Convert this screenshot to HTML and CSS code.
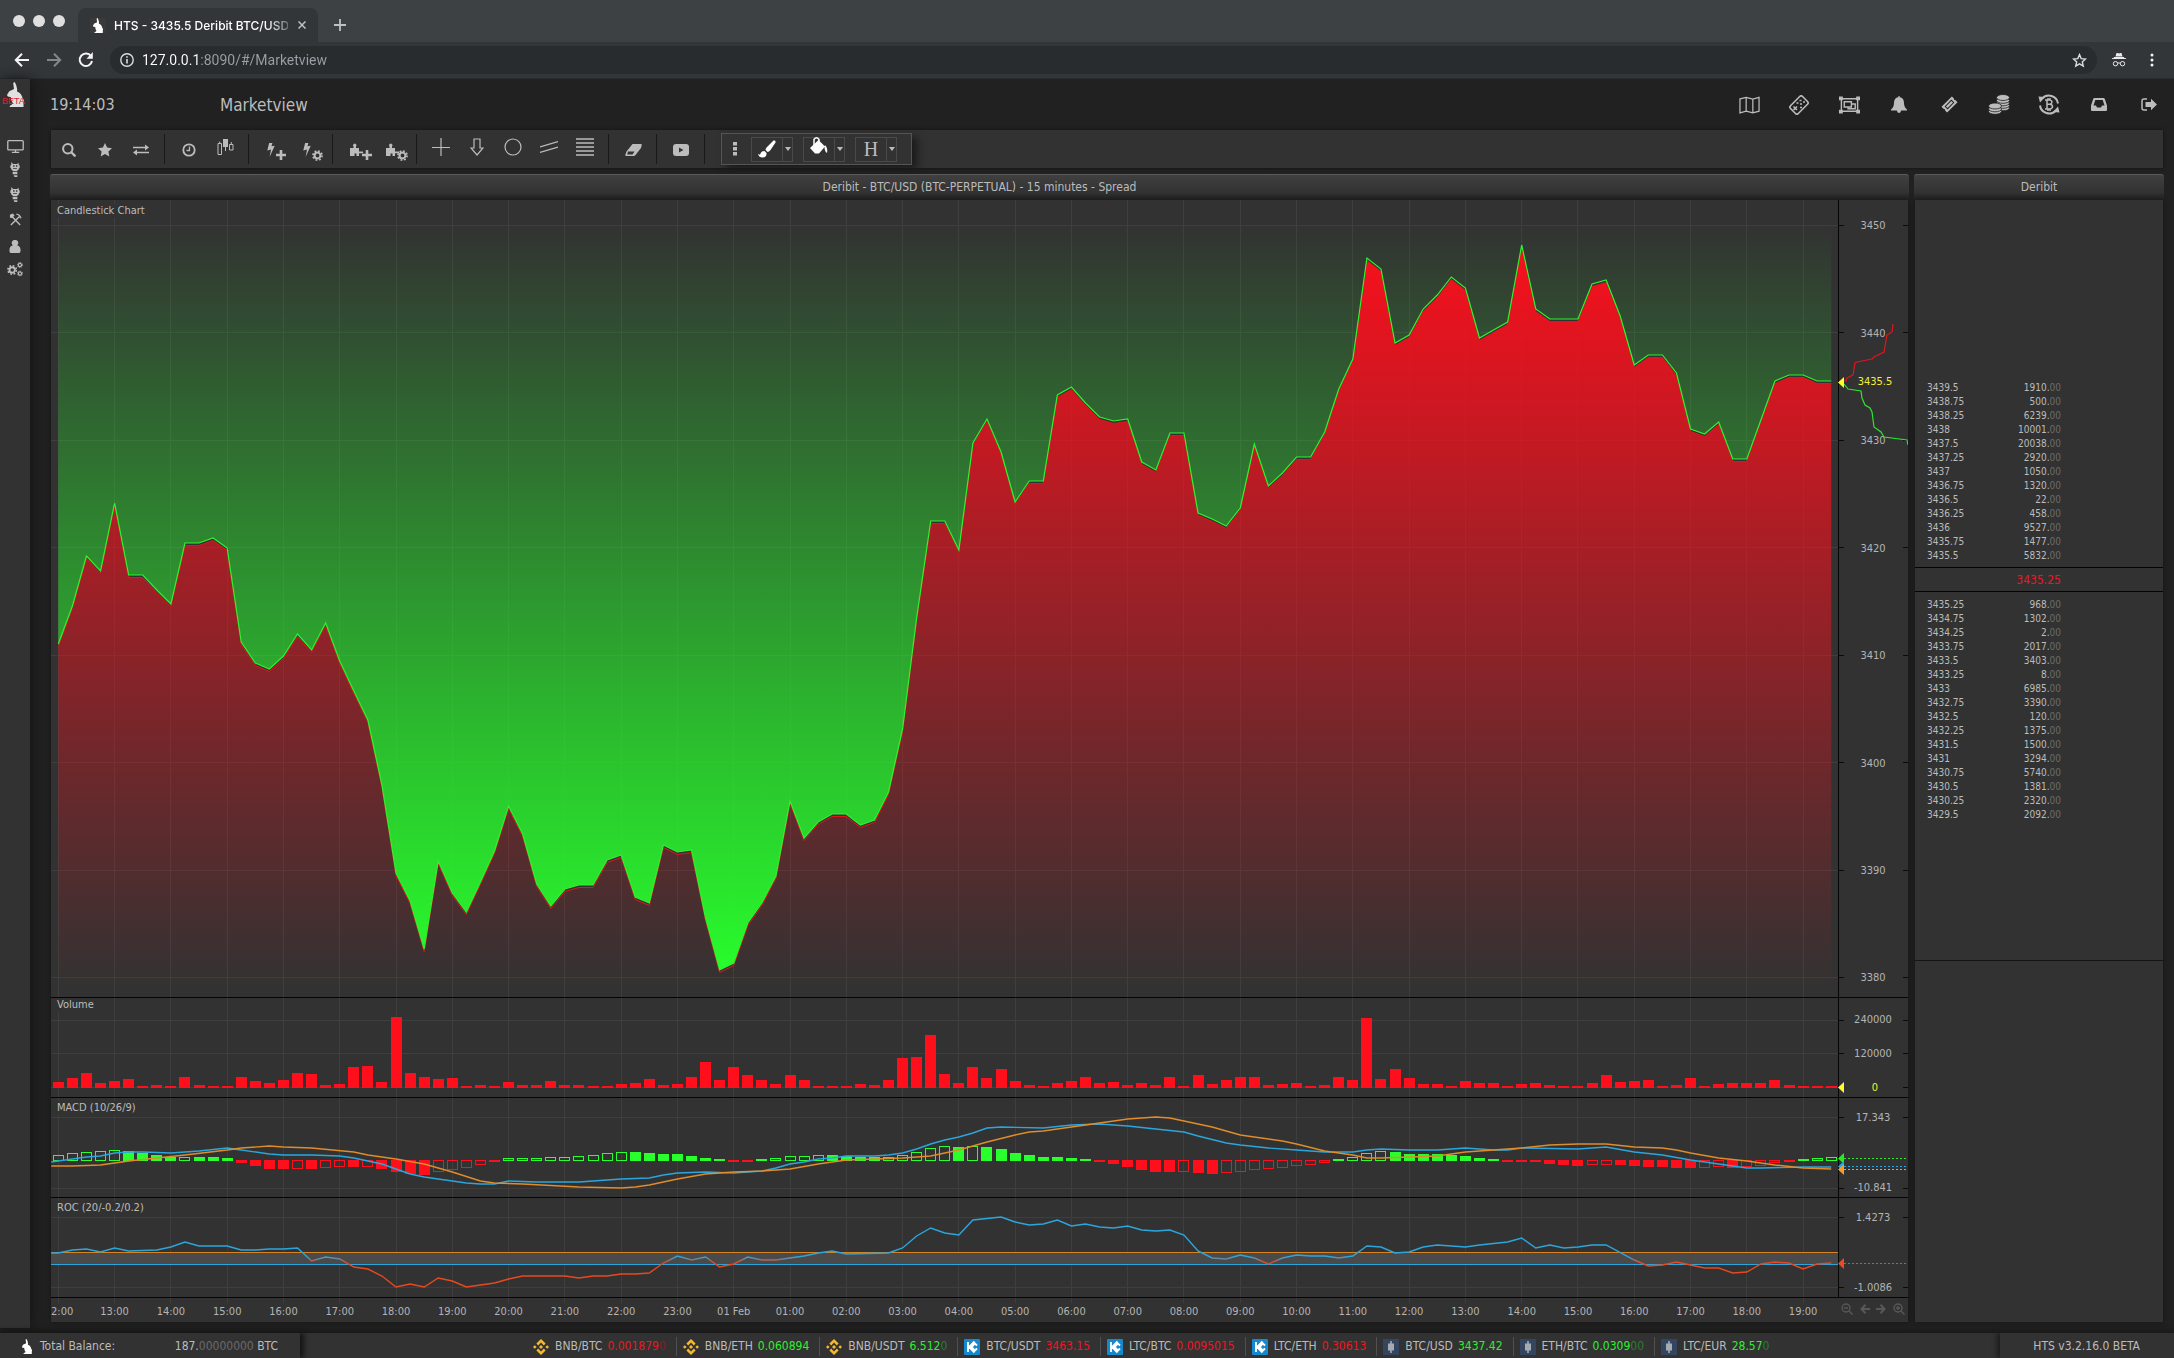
FILE: index.html
```html
<!DOCTYPE html>
<html lang="en">
<head>
<meta charset="utf-8">
<title>HTS - 3435.5 Deribit BTC/USD</title>
<link rel="stylesheet" href="styles.css">
</head>
<body>
<svg class="sprite" aria-hidden="true">
  <defs>
  <symbol id="rabbit" viewBox="0 0 17 25"><path fill="currentColor" d="M6.200 1L7.800 0l1.500 3.500L10.200 7.500 10 9.500c3 .8 5 3.500 5.800 7.500 1.200.5 1.500 2.500.7 3.700L16.500 25H2.500q0-1.500 2-2.200L6 21.500 4.200 18 4 15.200 1 14.500Q0 13.800.2 12.500L2.300 9.200 5.500 7.800 7 7z"/></symbol>
  <symbol id="monitor" viewBox="0 0 18 14"><path fill="none" stroke="currentColor" stroke-width="1.400" d="M1.700.7h14.600q1 0 1 1v8q0 1-1 1H1.700q-1 0-1-1v-8q0-1 1-1zM9 11v2M5 13.300h8"/></symbol>
  <symbol id="robot" viewBox="0 0 10 16"><path fill="currentColor" fill-rule="evenodd" d="M1 0l2 2h4l2-1v2l1 1v2l-1 1v1L7 9.500H3L1 8V7L0 6V4l1-1zM3 3.500v1.500h1.500V3.500zm3 0v1.500h1.500V3.500zM3 6.300v1h4v-1zM2.500 10.500h5V13h-5zM3.500 14h4v2h-3z"/></symbol>
  <symbol id="tools" viewBox="0 0 14 14"><path fill="none" stroke="currentColor" stroke-width="1.500" d="M3.500 4L12 13M2 13l9-9M8 1.200q3.500.3 4.800 4.500"/><path fill="currentColor" d="M1 2l3-1.500 2 2L3.500 5.500 1 5z"/></symbol>
  <symbol id="user" viewBox="0 0 12 14"><path fill="currentColor" d="M6 0a3.200 3.200 0 0 1 2.300 5.700C11 6.200 12 8.500 12 11.500 12 13 11 14 10 14H2c-1 0-2-1-2-2.500C0 8.500 1 6.200 3.700 5.700A3.200 3.200 0 0 1 6 0z"/></symbol>
  <symbol id="gear" viewBox="0 0 12 12"><circle cx="6" cy="6" r="3.200" fill="none" stroke="currentColor" stroke-width="2.200"/><circle cx="6" cy="6" r="5" fill="none" stroke="currentColor" stroke-width="1.800" stroke-dasharray="2 1.930"/></symbol>
  <symbol id="gears" viewBox="0 0 17 16"><use href="#gear" x="0" y="3" width="11" height="11"/><use href="#gear" x="10.500" y="0" width="6.500" height="6.500"/><use href="#gear" x="10.500" y="9" width="6.500" height="6.500"/></symbol>
  <symbol id="search" viewBox="0 0 14 14"><circle cx="5.800" cy="5.800" r="4.700" fill="none" stroke="currentColor" stroke-width="2"/><path stroke="currentColor" stroke-width="2.400" stroke-linecap="round" d="M9.500 9.500l3.200 3.200"/></symbol>
  <symbol id="star" viewBox="0 0 14 14"><path fill="currentColor" d="M7 0l2.100 4.600 4.900.6-3.600 3.400.9 4.900L7 11.100l-4.300 2.400.9-4.900L0 5.200l4.900-.6z"/></symbol>
  <symbol id="swap" viewBox="0 0 16 12"><path fill="none" stroke="currentColor" stroke-width="1.600" d="M0 3.500h13M3 8.500h13"/><path fill="currentColor" d="M12 .5l4 3-4 3zM4 5.500l-4 3 4 3z"/></symbol>
  <symbol id="clock" viewBox="0 0 14 14"><circle cx="7" cy="7" r="5.700" fill="none" stroke="currentColor" stroke-width="1.800"/><path fill="none" stroke="currentColor" stroke-width="1.300" d="M7.500 3.500v4h-3"/></symbol>
  <symbol id="candles" viewBox="0 0 17 17"><path fill="none" stroke="currentColor" d="M1 4.500h3.500v11H1zM2.700 2.500v2M12.500 5.500H16v5.500h-3.500zM14.300 3v2"/><path fill="currentColor" d="M6 0h5v8H6z"/><path stroke="currentColor" d="M8.500 8v4"/></symbol>
  <symbol id="bolt" viewBox="0 0 8 15"><path fill="currentColor" d="M2 0h3.500L4.500 3.500 8 3 2.500 15 4 7 0 8z"/></symbol>
  <symbol id="cross" viewBox="0 0 10 10"><path stroke="currentColor" stroke-width="2.600" d="M5 0v10M0 5h10"/></symbol>
  <symbol id="boltplus" viewBox="0 0 20 18"><use href="#bolt" x="0" y="0" width="8" height="14"/><use href="#cross" x="9" y="7" width="10" height="10"/></symbol>
  <symbol id="boltgear" viewBox="0 0 20 18"><use href="#bolt" x="0" y="0" width="8" height="14"/><use href="#gear" x="9" y="7" width="11" height="11"/></symbol>
  <symbol id="puzzle" viewBox="0 0 14 13"><path fill="currentColor" d="M0 5h3.500V3.500a1.700 1.700 0 1 1 2.500 0V5h3v3.500h4v1.800H9V13H6.500v-2.500h-2V13H0z"/></symbol>
  <symbol id="puzzleplus" viewBox="0 0 22 18"><use href="#puzzle" x="0" y="0" width="14" height="13"/><use href="#cross" x="12" y="7" width="10" height="10"/></symbol>
  <symbol id="puzzlegear" viewBox="0 0 22 18"><use href="#puzzle" x="0" y="0" width="14" height="13"/><use href="#gear" x="11" y="7" width="11" height="11"/></symbol>
  <symbol id="thinplus" viewBox="0 0 18 18"><path stroke="currentColor" stroke-width="1.200" d="M9 0v18M0 9.500h18"/></symbol>
  <symbol id="down" viewBox="0 0 14 18"><path fill="none" stroke="currentColor" stroke-width="1.200" d="M4 1h6v9h3l-6 7-6-7h3z"/></symbol>
  <symbol id="circle" viewBox="0 0 18 18"><circle cx="9" cy="9" r="8" fill="none" stroke="currentColor" stroke-width="1.200"/></symbol>
  <symbol id="lines2" viewBox="0 0 18 14"><path stroke="currentColor" stroke-width="1.200" d="M0 7L18 1.500M0 12.500L18 7"/></symbol>
  <symbol id="lines4" viewBox="0 0 18 18"><path stroke="currentColor" stroke-width="1.300" d="M0 1h18M0 5h18M0 9h18M0 13h18M0 17h18"/></symbol>
  <symbol id="eraser" viewBox="0 0 17 12"><path fill="currentColor" d="M7.500 0H16q1 0 .7 1.200L16 4l-5.500 7q-.7 1-1.700 1H1q-1-.2-.6-1.500L1.500 7.500z"/><path fill="#323232" d="M3 7.500h6.500L7.500 10.500H2.200z"/></symbol>
  <symbol id="video" viewBox="0 0 16 12"><rect width="16" height="12" rx="3" fill="currentColor"/><path fill="#323232" d="M6 3.500v5L10.500 6z"/></symbol>
  <symbol id="dots3" viewBox="0 0 5 14"><path fill="currentColor" d="M0 0h4v3.500H0zM0 5h4v3.500H0zM0 10h4v3.500H0z"/></symbol>
  <symbol id="brush" viewBox="0 0 18 18"><path fill="currentColor" d="M15.500.5q2.500-.5 2 2L12.500 10Q11 12 9.500 12L7.500 10q0-1.500 1.500-3zM6.500 11l2 2q.5 4.500-4 4.500Q1 17.500 0 14l2 .8Q3 11 6.500 11z"/></symbol>
  <symbol id="bucket" viewBox="0 0 18 17"><path fill="currentColor" d="M0 11L8.500 3l6.500 6.500L9 16.500H5zM15 8q3 3 2 8-2-1-2.500-5z"/><path fill="none" stroke="currentColor" stroke-width="1.500" d="M4 8V2.500Q6.500-1 9 2.500V9"/></symbol>
  <symbol id="caret" viewBox="0 0 6 4"><path fill="currentColor" d="M0 0h6L3 4z"/></symbol>
  <symbol id="map" viewBox="0 0 22 18"><path fill="none" stroke="currentColor" stroke-width="1.300" d="M1 2.500L7.500 1l7 1.700L21 1v14.500l-6.500 1.700-7-1.700L1 17.200zM7.500 1v14.500M14.500 2.700v14.500"/></symbol>
  <symbol id="dice" viewBox="0 0 22 20"><rect x="2.500" y="4.500" width="17" height="11" rx="2" transform="rotate(-45 11 10)" fill="none" stroke="currentColor" stroke-width="1.600"/><path stroke="currentColor" stroke-width="1.500" d="M5.500 11.500l3.500 3.500M9 11.500L5.500 15M8.500 8h2M11.500 5.500h2M12 9h2M15 7h2M12 12.500h2"/></symbol>
  <symbol id="group" viewBox="0 0 22 18"><path fill="none" stroke="currentColor" stroke-width="1.500" d="M2.500 2.500h17v13h-17zM5.500 5.500h7.500v5.500H5.500zM13.500 8H17v5H9.500v-2"/><path fill="currentColor" d="M0 0h4v4H0zM18 0h4v4h-4zM0 14h4v4H0zM18 14h4v4h-4z"/></symbol>
  <symbol id="bell" viewBox="0 0 16 17"><path fill="currentColor" d="M7.200.3h1.600v1Q13 2 13 7q0 4 3 6.500v1h-5.800Q9.500 17 8 17t-2.200-2.500H0v-1Q3 11 3 7q0-5 4.200-5.700z"/></symbol>
  <symbol id="ticket" viewBox="0 0 18 18"><path fill="currentColor" fill-rule="evenodd" d="M11.500.5L13.500 2.500q-.3 2 2 2L17.500 6.500 6.500 17.500 4.500 15.500q.3-2-2-2L.5 11.500zM3.800 11l3.200 3.200L14.200 7 11 3.800z"/><path fill="currentColor" d="M5.200 11L7 12.800 12.800 7 11 5.200z"/></symbol>
  <symbol id="coins" viewBox="0 0 22 21"><g fill="currentColor" stroke="#202020" stroke-width=".8"><ellipse cx="15" cy="14" rx="6.500" ry="2.800"/><ellipse cx="15" cy="11.500" rx="6.500" ry="2.800"/><ellipse cx="15" cy="9" rx="6.500" ry="2.800"/><ellipse cx="15" cy="6.500" rx="6.500" ry="2.800"/><ellipse cx="15" cy="3.500" rx="6.500" ry="3"/><ellipse cx="7" cy="17.500" rx="6.500" ry="2.800"/><ellipse cx="7" cy="15" rx="6.500" ry="2.800"/><ellipse cx="7" cy="12" rx="6.500" ry="3"/></g></symbol>
  <symbol id="btcloop" viewBox="0 0 22 21"><path fill="none" stroke="currentColor" stroke-width="2" d="M4 4.500a9.300 9.300 0 0 1 16 5M18 16.500a9.300 9.300 0 0 1-16-5"/><path fill="currentColor" d="M.5 2.500l6.500.5-5 5.500zM21.500 18.500L15 18l5-5.500z"/><path fill="none" stroke="currentColor" stroke-width="1.500" d="M9 6.500v8M7 6h5q2 .3 2 2t-2 2.200H9M12 10.200q2.500.3 2.500 2.300T12 15H7M10 4v2M12 4v2M10 15v2M12 15v2"/></symbol>
  <symbol id="inbox" viewBox="0 0 16 13"><path fill="currentColor" fill-rule="evenodd" d="M3.500 0h9q1 0 1.300 1L16 7.500V12q0 1-1 1H1q-1 0-1-1V7.500L2.200 1q.3-1 1.300-1zM4.300 2L2.500 7.500H5L6 9.500h4l1-2h2.500L11.700 2z"/></symbol>
  <symbol id="exit" viewBox="0 0 16 13"><path fill="none" stroke="currentColor" stroke-width="1.500" d="M6 1H3Q1 1 1 3v7q0 2 2 2h3"/><path fill="currentColor" d="M4.500 4H10V.8l6 5.700-6 5.700V9H4.500z"/></symbol>
  <symbol id="zoomout" viewBox="0 0 12 12"><path fill="none" stroke="currentColor" stroke-width="1.400" d="M5 1a4 4 0 1 1 0 8 4 4 0 0 1 0-8zM8 8l3.500 3.500M3 5h4"/></symbol>
  <symbol id="zoomin" viewBox="0 0 12 12"><path fill="none" stroke="currentColor" stroke-width="1.400" d="M5 1a4 4 0 1 1 0 8 4 4 0 0 1 0-8zM8 8l3.500 3.500M3 5h4M5 3v4"/></symbol>
  <symbol id="left" viewBox="0 0 10 10"><path fill="none" stroke="currentColor" stroke-width="2" d="M5.500.8L1.500 5l4 4.200M1.500 5H10"/></symbol>
  <symbol id="right" viewBox="0 0 10 10"><path fill="none" stroke="currentColor" stroke-width="2" d="M4.500.8l4 4.200-4 4.200M8.500 5H0"/></symbol>
  <symbol id="back" viewBox="0 0 16 14"><path fill="none" stroke="currentColor" stroke-width="2" d="M8 .8L1.800 7 8 13.200M2 7h13"/></symbol>
  <symbol id="forward" viewBox="0 0 16 14"><path fill="none" stroke="currentColor" stroke-width="2" d="M8 .8L14.200 7 8 13.200M14 7H1"/></symbol>
  <symbol id="reload" viewBox="0 0 16 16"><path fill="none" stroke="currentColor" stroke-width="2" d="M13 4.200A6.200 6.200 0 1 0 14 9"/><path fill="currentColor" d="M14.800 0v6.800H8.500z"/></symbol>
  <symbol id="info" viewBox="0 0 14 14"><circle cx="7" cy="7" r="6.200" fill="none" stroke="currentColor" stroke-width="1.400"/><path stroke="currentColor" stroke-width="1.600" d="M7 6v4.500M7 3.200v1.600"/></symbol>
  <symbol id="close" viewBox="0 0 8 8"><path stroke="currentColor" stroke-width="1.500" d="M.5.5l7 7M7.500.5l-7 7"/></symbol>
  <symbol id="newtab" viewBox="0 0 12 12"><path stroke="currentColor" stroke-width="1.800" d="M6 0v12M0 6h12"/></symbol>
  <symbol id="staro" viewBox="0 0 14 14"><path fill="none" stroke="currentColor" stroke-width="1.300" d="M7 1.500l1.600 3.700 4 .4-3 2.700.9 4L7 10.200l-3.500 2.100.9-4-3-2.700 4-.4z"/></symbol>
  <symbol id="incognito" viewBox="0 0 14 14"><path fill="currentColor" d="M4.500 0h1.300L7 .6 8.200 0h1.300l1 3.500h-7zM2 4h10v.8l2 .5V6H0v-.7l2-.5z"/><path fill="none" stroke="currentColor" d="M3.500 8.500a2.200 2.200 0 1 1 0 4.400 2.200 2.200 0 0 1 0-4.400zM10.500 8.500a2.200 2.200 0 1 1 0 4.400 2.200 2.200 0 0 1 0-4.400zM5.700 10.200q1.300-.7 2.600 0"/></symbol>
  <symbol id="vdots" viewBox="0 0 4 14"><circle cx="2" cy="2" r="1.500" fill="currentColor"/><circle cx="2" cy="7" r="1.500" fill="currentColor"/><circle cx="2" cy="12" r="1.500" fill="currentColor"/></symbol>
  <symbol id="binance" viewBox="0 0 16 16"><path fill="#f3ba2f" d="M8 0l4.600 4.600-1.800 1.800L8 3.600 5.200 6.400 3.400 4.600zM1.800 6.200L3.600 8 1.800 9.800 0 8zM14.200 6.200L16 8l-1.800 1.800L12.400 8zM8 6l2 2-2 2-2-2zM8 16l-4.600-4.600 1.800-1.800L8 12.400l2.800-2.800 1.800 1.800z"/></symbol>
  <symbol id="kucoin" viewBox="0 0 16 16"><rect width="16" height="16" rx="1" fill="#1689ce"/><path fill="none" stroke="#fff" stroke-width="1.800" d="M4 3v10M10.500 2.500L5 8l5.500 5.500M13 6.500l-2-2L7.500 8 11 11.500l2-2"/></symbol>
  <symbol id="candle" viewBox="0 0 16 16"><path fill="#33455f" d="M0 0h16v16H0z"/><path fill="#a4abb3" d="M7.200 2h1.600v2.500H11v7H8.800V14H7.200v-2.500H5v-7h2.200z"/></symbol>
  </defs>
</svg>

<header class="browser">
  <div class="tabs">
    <div class="lights"><i></i><i></i><i></i></div>
    <div class="tab">
      <svg class="favicon" width="16" height="15"><use href="#rabbit"/></svg>
      <span class="tab-title">HTS - 3435.5 Deribit BTC/USD</span>
      <button class="plain" aria-label="Close tab"><svg width="8" height="8"><use href="#close"/></svg></button>
    </div>
    <button class="plain new" aria-label="New tab"><svg width="12" height="12"><use href="#newtab"/></svg></button>
  </div>
  <div class="nav">
    <button class="plain lit" aria-label="Back"><svg width="16" height="14"><use href="#back"/></svg></button>
    <button class="plain dim" aria-label="Forward"><svg width="16" height="14"><use href="#forward"/></svg></button>
    <button class="plain lit" aria-label="Reload"><svg width="16" height="16"><use href="#reload"/></svg></button>
    <div class="address">
      <svg width="14" height="14"><use href="#info"/></svg>
      <input type="text" aria-label="Address" value="127.0.0.1:8090/#/Marketview">
      <button class="plain" aria-label="Bookmark"><svg width="15" height="15"><use href="#staro"/></svg></button>
    </div>
    <svg class="incognito" width="14" height="14"><use href="#incognito"/></svg>
    <button class="plain lit" aria-label="Menu"><svg width="4" height="14"><use href="#vdots"/></svg></button>
  </div>
</header>

<div class="app">
  <nav class="side">
    <a href="#home" class="logo" aria-label="Home"><svg width="17" height="25"><use href="#rabbit"/></svg><span>BETA</span></a>
    <a href="#monitor" class="tall" aria-label="Markets"><svg width="17" height="13"><use href="#monitor"/></svg></a>
    <a href="#bots" aria-label="Bots"><svg width="10" height="15"><use href="#robot"/></svg></a>
    <a href="#scripts" aria-label="Scripts"><svg width="10" height="15"><use href="#robot"/></svg></a>
    <a href="#tools" aria-label="Tools"><svg width="13" height="13"><use href="#tools"/></svg></a>
    <a href="#account" class="low" aria-label="Account"><svg width="12" height="13"><use href="#user"/></svg></a>
    <a href="#settings" aria-label="Settings"><svg width="16" height="15"><use href="#gears"/></svg></a>
  </nav>

  <main class="main">
    <div class="head">
      <time>19:14:03</time>
      <h1>Marketview</h1>
      <div class="head-icons">
        <button class="plain" aria-label="Map"><svg width="21" height="18"><use href="#map"/></svg></button>
        <button class="plain" aria-label="Games"><svg width="22" height="20"><use href="#dice"/></svg></button>
        <button class="plain" aria-label="Layout"><svg width="21" height="18"><use href="#group"/></svg></button>
        <button class="plain" aria-label="Alerts"><svg width="16" height="17"><use href="#bell"/></svg></button>
        <button class="plain" aria-label="Tickets"><svg width="17" height="17"><use href="#ticket"/></svg></button>
        <button class="plain" aria-label="Balances"><svg width="22" height="21"><use href="#coins"/></svg></button>
        <button class="plain" aria-label="Exchange"><svg width="22" height="21"><use href="#btcloop"/></svg></button>
        <button class="plain" aria-label="Inbox"><svg width="16" height="13"><use href="#inbox"/></svg></button>
        <button class="plain" aria-label="Log out"><svg width="16" height="13"><use href="#exit"/></svg></button>
      </div>
    </div>

    <div class="toolbar">
      <div class="set">
        <button aria-label="Search"><svg width="14" height="14"><use href="#search"/></svg></button>
        <button aria-label="Favorite"><svg width="14" height="14"><use href="#star"/></svg></button>
        <button aria-label="Swap"><svg width="16" height="12"><use href="#swap"/></svg></button>
      </div>
      <div class="set">
        <button aria-label="Interval"><svg width="14" height="14"><use href="#clock"/></svg></button>
        <button aria-label="Chart style" class="high"><svg width="17" height="17"><use href="#candles"/></svg></button>
      </div>
      <div class="set wide">
        <button aria-label="Add indicator"><svg width="20" height="18"><use href="#boltplus"/></svg></button>
        <button aria-label="Edit indicators"><svg width="20" height="18"><use href="#boltgear"/></svg></button>
      </div>
      <div class="set wide">
        <button aria-label="Add plugin"><svg width="22" height="18"><use href="#puzzleplus"/></svg></button>
        <button aria-label="Edit plugins"><svg width="22" height="18"><use href="#puzzlegear"/></svg></button>
      </div>
      <div class="set high">
        <button aria-label="Crosshair"><svg width="18" height="18"><use href="#thinplus"/></svg></button>
        <button aria-label="Arrow"><svg width="14" height="18"><use href="#down"/></svg></button>
        <button aria-label="Circle"><svg width="18" height="18"><use href="#circle"/></svg></button>
        <button aria-label="Channel"><svg width="18" height="14"><use href="#lines2"/></svg></button>
        <button aria-label="Levels"><svg width="18" height="18"><use href="#lines4"/></svg></button>
      </div>
      <div class="set"><button aria-label="Erase"><svg width="17" height="12"><use href="#eraser"/></svg></button></div>
      <div class="set"><button aria-label="Video"><svg width="16" height="12"><use href="#video"/></svg></button></div>
      <div class="float">
        <svg class="grip" width="5" height="14"><use href="#dots3"/></svg>
        <div class="split"><button aria-label="Line color"><svg width="18" height="18"><use href="#brush"/></svg></button><button aria-label="Line color options"><svg width="6" height="4"><use href="#caret"/></svg></button></div>
        <div class="split"><button aria-label="Fill color" class="high"><svg width="18" height="17"><use href="#bucket"/></svg></button><button aria-label="Fill color options"><svg width="6" height="4"><use href="#caret"/></svg></button></div>
        <div class="split"><button class="letter">H</button><button aria-label="Text options"><svg width="6" height="4"><use href="#caret"/></svg></button></div>
      </div>
    </div>

    <div class="columns">
      <section class="chart">
        <h2>Deribit - BTC/USD (BTC-PERPETUAL) - 15 minutes - Spread</h2>
        <div class="panels">
          <svg id="price" class="panel price"></svg>
          <svg id="volume" class="panel"></svg>
          <svg id="macd" class="panel"></svg>
          <svg id="roc" class="panel"></svg>
          <div class="times">
            <svg id="time" class="time-axis"></svg>
            <div class="zoomers">
              <button class="plain" aria-label="Zoom out"><svg width="12" height="12"><use href="#zoomout"/></svg></button>
              <button class="plain" aria-label="Earlier"><svg width="10" height="10"><use href="#left"/></svg></button>
              <button class="plain" aria-label="Later"><svg width="10" height="10"><use href="#right"/></svg></button>
              <button class="plain" aria-label="Zoom in"><svg width="12" height="12"><use href="#zoomin"/></svg></button>
            </div>
          </div>
        </div>
      </section>

      <section class="book">
        <h2>Deribit</h2>
        <div class="book-body">
          <div class="asks"><table>
            <tr><td>3439.5</td><td>1910.<i>00</i></td></tr>
            <tr><td>3438.75</td><td>500.<i>00</i></td></tr>
            <tr><td>3438.25</td><td>6239.<i>00</i></td></tr>
            <tr><td>3438</td><td>10001.<i>00</i></td></tr>
            <tr><td>3437.5</td><td>20038.<i>00</i></td></tr>
            <tr><td>3437.25</td><td>2920.<i>00</i></td></tr>
            <tr><td>3437</td><td>1050.<i>00</i></td></tr>
            <tr><td>3436.75</td><td>1320.<i>00</i></td></tr>
            <tr><td>3436.5</td><td>22.<i>00</i></td></tr>
            <tr><td>3436.25</td><td>458.<i>00</i></td></tr>
            <tr><td>3436</td><td>9527.<i>00</i></td></tr>
            <tr><td>3435.75</td><td>1477.<i>00</i></td></tr>
            <tr><td>3435.5</td><td>5832.<i>00</i></td></tr>
          </table></div>
          <p class="last">3435.25</p>
          <div class="bids"><table>
            <tr><td>3435.25</td><td>968.<i>00</i></td></tr>
            <tr><td>3434.75</td><td>1302.<i>00</i></td></tr>
            <tr><td>3434.25</td><td>2.<i>00</i></td></tr>
            <tr><td>3433.75</td><td>2017.<i>00</i></td></tr>
            <tr><td>3433.5</td><td>3403.<i>00</i></td></tr>
            <tr><td>3433.25</td><td>8.<i>00</i></td></tr>
            <tr><td>3433</td><td>6985.<i>00</i></td></tr>
            <tr><td>3432.75</td><td>3390.<i>00</i></td></tr>
            <tr><td>3432.5</td><td>120.<i>00</i></td></tr>
            <tr><td>3432.25</td><td>1375.<i>00</i></td></tr>
            <tr><td>3431.5</td><td>1500.<i>00</i></td></tr>
            <tr><td>3431</td><td>3294.<i>00</i></td></tr>
            <tr><td>3430.75</td><td>5740.<i>00</i></td></tr>
            <tr><td>3430.5</td><td>1381.<i>00</i></td></tr>
            <tr><td>3430.25</td><td>2320.<i>00</i></td></tr>
            <tr><td>3429.5</td><td>2092.<i>00</i></td></tr>
          </table></div>
          <div class="rest"></div>
        </div>
      </section>
    </div>
  </main>
</div>

<footer class="foot">
  <div class="balance">
    <svg width="12" height="15"><use href="#rabbit"/></svg>
    <span>Total Balance:</span>
    <span class="amount">187.<i>00000000</i> BTC</span>
  </div>
  <ul class="ticker">
    <li><svg width="16" height="16"><use href="#binance"/></svg>BNB/BTC <b class="dn">0.001879<i>0</i></b></li>
    <li><svg width="16" height="16"><use href="#binance"/></svg>BNB/ETH <b class="up">0.060894</b></li>
    <li><svg width="16" height="16"><use href="#binance"/></svg>BNB/USDT <b class="up">6.512<i>0</i></b></li>
    <li><svg width="16" height="16"><use href="#kucoin"/></svg>BTC/USDT <b class="dn">3463.15</b></li>
    <li><svg width="16" height="16"><use href="#kucoin"/></svg>LTC/BTC <b class="dn">0.0095015</b></li>
    <li><svg width="16" height="16"><use href="#kucoin"/></svg>LTC/ETH <b class="dn">0.30613</b></li>
    <li><svg width="16" height="16"><use href="#candle"/></svg>BTC/USD <b class="up">3437.42</b></li>
    <li><svg width="16" height="16"><use href="#candle"/></svg>ETH/BTC <b class="up">0.0309<i>00</i></b></li>
    <li><svg width="16" height="16"><use href="#candle"/></svg>LTC/EUR <b class="up">28.57<i>0</i></b></li>
  </ul>
  <div class="version">HTS v3.2.16.0 BETA</div>
</footer>
<script src="chart.js"></script>
</body>
</html>
```
FILE: styles.css
```css
* { box-sizing: border-box; }
body {
  margin: 0;
  min-height: 100vh;
  display: flex;
  flex-direction: column;
  background: #212121;
  color: #bcbcbc;
  font-family: "DejaVu Sans Condensed", "DejaVu Sans", sans-serif;
  font-stretch: condensed;
  font-size: 11px;
}
h1, h2, p, ul { margin: 0; padding: 0; font-weight: normal; }
button { font: inherit; color: inherit; background: none; border: 0; padding: 0; margin: 0; }
svg { display: block; flex: none; }
i { font-style: normal; color: #6a6a6a; }
a { color: inherit; text-decoration: none; }
.sprite { position: absolute; width: 0; height: 0; }
.plain { display: flex; align-items: center; justify-content: center; }

/* browser window */
.browser { background: #323639; font-family: Roboto, sans-serif; color: #bdc1c6; }
.tabs { display: flex; height: 42px; padding-top: 8px; background: #3d4144; }
.lights { display: flex; gap: 8px; padding: 7px 0 0 13px; width: 78px; }
.lights i { width: 12px; height: 12px; border-radius: 50%; background: #dfdfdf; }
.tab { display: flex; align-items: center; width: 240px; padding: 0 12px; border-radius: 8px 8px 0 0; background: #323639; }
.favicon { color: #fff; background: #3a3a3a; }
.tab-title {
  flex: 1; margin: 0 10px 0 8px; overflow: hidden; white-space: nowrap;
  font: 500 12px Inter, sans-serif; color: #fff;
  mask-image: linear-gradient(90deg, #000 88%, rgba(0,0,0,.3));
}
.new { margin-left: 16px; }
.nav { display: flex; align-items: center; height: 37px; padding: 0 20px 0 14px; border-bottom: 1px solid #2a2d30; }
.nav .plain { width: 16px; margin-right: 16px; }
.nav > .plain:last-child { width: 4px; margin: 0; }
.lit { color: #f4f4f4; }
.dim { color: #84878a; }
.address { flex: 1; display: flex; align-items: center; height: 28px; margin-right: 15px; padding: 0 10px; border-radius: 14px; background: #282c2f; color: #dadce0; }
.nav .address .plain { margin: 0; }
.address input {
  flex: 1; margin-left: 8px; padding: 0; border: 0; outline: 0; font: 14px Roboto, sans-serif;
  color: transparent;
  background: linear-gradient(90deg, #fff 56px, #9aa0a6 56px);
  -webkit-background-clip: text; background-clip: text;
}
.incognito { color: #e8eaed; margin-right: 24px; }

/* application frame */
.app { flex: 1; display: flex; }
.side { width: 30px; background: #323232; box-shadow: 2px 0 12px #151515; margin-bottom: 5px; color: #bdbdbd; }
.side a { display: flex; align-items: center; justify-content: center; height: 25px; }
.side a.logo { position: relative; height: 56px; align-items: flex-start; padding-top: 3px; color: #e0e0e0; }
.side a.tall { height: 22px; }
.side a.low { padding-top: 4px; }
.logo span { position: absolute; left: 2px; top: 17px; font: 9px "Liberation Sans", sans-serif; color: #e02030; }
.main { flex: 1; display: flex; flex-direction: column; min-width: 0; padding: 0 10px 11px 20px; }
.head { display: flex; align-items: center; height: 51px; font-size: 16px; }
.head time { width: 170px; }
.head h1 { flex: 1; font-size: 17px; }
.head-icons { display: flex; margin-right: -10px; }
.head-icons .plain { width: 50px; height: 30px; }

.toolbar { display: flex; align-items: center; height: 38px; margin: 0 1px 6px; background: #323232; box-shadow: 0 0 3px #111; }
.set { display: flex; padding-right: 5px; margin-right: 6px; border-right: 1px solid #191919; }
.set button { display: flex; align-items: center; justify-content: center; width: 36px; height: 30px; padding-top: 2px; }
.set.high button, .set button.high { padding: 0 0 4px; }
.set.wide button { padding: 6px 0 0 8px; }
.float { display: flex; align-items: center; gap: 10px; height: 32px; margin-left: 10px; padding: 0 14px 0 11px; border: 1px solid #555; background: #323232; box-shadow: 5px 4px 8px #1a1a1a; }
.grip { margin-right: 3px; }
.split { display: flex; height: 25px; border: 1px solid #4a4a4a; }
.split button { display: flex; align-items: center; justify-content: center; width: 30px; color: #fff; }
.split button.high { padding-bottom: 7px; }
.split button + button { width: 10px; border-left: 1px solid #4a4a4a; color: #bcbcbc; }
.split button.letter { font: 20px "Liberation Serif", serif; color: #bcbcbc; }

.columns { flex: 1; display: flex; gap: 5px; }
.chart { flex: 1; min-width: 0; display: flex; flex-direction: column; }
.book { width: 250px; display: flex; flex-direction: column; }
h2 { height: 26px; font-size: 12px; line-height: 24px; text-align: center; border-top: 1px solid #5a5a5a; border-radius: 3px 3px 0 0; background: linear-gradient(#404040, #323232 70%, #222); }
.panels, .book-body { flex: 1; margin: 0 1px; background: #323232; box-shadow: 0 0 5px #151515; }
.panels { display: flex; flex-direction: column; }
.panel { width: 100%; height: 100px; font-size: 11px; }
.price { flex: 1; min-height: 300px; }
.times { display: flex; height: 25px; }
.time-axis { flex: 1; height: 25px; min-width: 0; }
.zoomers { display: flex; align-items: center; justify-content: space-between; width: 70px; padding: 0 3px 2px; border-top: 1px solid #050505; color: #585858; }

.book-body { display: grid; grid-template-rows: 367fr auto 369fr 361fr; font-size: 10px; }
.asks { display: flex; align-items: flex-end; padding-bottom: 4px; }
.bids { padding-top: 6px; border-bottom: 1px solid #151515; }
table { width: 146px; margin-left: 0; border-collapse: collapse; }
td { height: 14px; padding: 0; line-height: 14px; text-align: right; }
td:first-child { padding-left: 12px; text-align: left; }
.last { height: 25px; padding-right: 102px; border: solid #050505; border-width: 1px 0; font-size: 12px; line-height: 24px; text-align: right; color: #f01522; }

/* footer */
.foot { display: flex; height: 25px; background: #323232; font-size: 12px; line-height: 25px; white-space: nowrap; box-shadow: 0 -2px 5px #181818; }
.balance { display: flex; align-items: center; width: 300px; padding: 2px 22px 0 21px; box-shadow: 4px 0 5px #151515; }
.balance svg { color: #fff; margin-right: 7px; }
.amount { margin-left: auto; }
.ticker { flex: 1; display: flex; align-items: center; padding: 2px 0 0 227px; list-style: none; }
.ticker li { display: flex; align-items: center; height: 19px; padding: 0 10px 0 6px; border-right: 1px solid #505050; }
.ticker li:last-child { border: 0; }
.ticker svg { margin-right: 6px; }
.ticker b { margin-left: 5px; font-weight: normal; }
.up { color: #2cf02f; }
.dn { color: #f01522; }
.up i { color: #2a7d2c; }
.dn i { color: #7d2229; }
.version { width: 174px; padding: 1px 34px 0 0; text-align: right; box-shadow: -3px 0 5px #1c1c1c; }
```
FILE: chart.js
```js
const NS = 'http://www.w3.org/2000/svg';
const AXIS = 70;
const BASE = 797;
const BARS = 127;

// Spread line, in panel units from the top of a 797-unit panel.
const spread = [444,406,356,371,303,375,375,390,404,343,343,338,348,442,463,469,456,434,450,423,461,491,520,585,673,701,749,661,693,712,682,651,606,634,684,706,689,685,685,660,655,697,703,645,652,650,718,770,763,723,703,676,601,638,622,614,614,625,620,592,529,418,321,321,350,243,219,252,302,281,281,195,187,203,217,221,219,262,270,233,233,313,319,326,308,244,286,273,257,257,232,189,159,58,69,143,135,109,95,77,88,138,130,122,45,109,119,119,119,84,80,116,165,155,155,173,229,234,222,259,259,220,181,175,175,181,181];
const volume = [6,10,15,5,7,9,2,3,2,11,3,2,2,11,7,5,8,15,14,3,4,21,22,6,71,15,11,9,10,2,3,2,6,3,3,7,3,3,2,2,4,5,9,3,4,11,26,8,21,13,8,4,13,8,2,2,2,4,3,8,30,31,53,14,5,21,10,19,7,3,2,5,7,11,5,6,3,5,3,11,2,13,4,8,11,11,3,4,5,2,3,11,8,70,9,19,10,4,4,2,7,5,5,2,4,5,3,2,2,5,13,6,7,8,2,3,10,2,4,5,5,5,8,3,2,2,2];
// Histogram entries: height, with "o" for a hollow bar.
const histogram = '6o 8o 9o 10o 11o 10 8 6 4 4o 4 4 3 -3 -6 -9 -9 -9o -9 -8o -7o -7 -7o -9 -12 -14 -15 -12o -10o -8o -5o -2 3o 3o 3o 4o 4o 5o 6o 8o 9o 9 8 7 7 5 3 2 -2 -2 2 3o 5o 5o 6o 6 5 4 4 4o 6o 9o 13o 15o 14 15o 14 12 8 6 4 4 3 2 -2 -4 -7 -10 -12 -12 -12o -13 -14 -13o -12o -10o -9o -8o -6o -5o -3o 2 4o 8o 10o 9 7 7 7 6 5 3 2 -2 -2 -2 -4 -5 -6 -5o -5o -5 -6 -7 -7 -8 -8 -8o -7o -8 -7o -6o -3o -2 2 3o 4o'.split(' ');
const macdLine = [[-.5,65],[0,64],[1,62],[2,60],[3,59],[4,56],[5,55],[6,55],[8,56],[10,54],[12,51],[13,53],[15,57],[16,58],[18,58],[20,59],[21,61],[22,64],[23,67],[24,72],[25,77],[26,80],[27,82],[28,84],[29,86],[30,87],[31,87],[32,84],[34,85],[37,85],[40,82],[42,81],[43,78],[44,76],[46,75],[48,76],[50,74],[51,71],[52,67],[53,65],[54,62],[55,61],[56,59],[58,59],[59,58],[60,56],[61,52],[62,47],[63,43],[64,40],[65,36],[66,31],[67,30],[70,31],[72,28],[74,27],[76,29],[78,32],[80,35],[81,39],[83,46],[84,48],[86,51],[88,53],[90,55],[92,55],[93,53],[94,52],[96,53],[98,53],[100,51],[102,53],[103,53],[104,51],[108,52],[110,50],[112,55],[114,58],[116,63],[118,67],[120,71],[121,71],[124,70],[126,70]];
const signalLine = [[-.5,69],[1,69],[3,68],[5,64],[7,61],[9,58],[12,53],[13,51],[15,49],[16,50],[18,51],[21,55],[22,58],[24,62],[26,67],[28,75],[30,84],[31,86],[33,87],[37,90],[40,91],[41,90],[42,88],[43,85],[44,82],[46,77],[48,75],[50,74],[52,72],[54,67],[56,63],[58,62],[60,61],[62,59],[64,53],[66,45],[68,38],[69,35],[70,34],[72,30],[74,26],[76,22],[77,21],[78,20],[79,21],[80,24],[82,30],[84,38],[85,40],[87,44],[88,47],[90,54],[92,58],[93,61],[94,61],[96,60],[98,59],[99,57],[100,55],[102,53],[104,51],[106,48],[108,47],[110,47],[112,50],[114,51],[115,53],[116,56],[118,61],[120,64],[122,68],[124,71],[126,72]];
const rocLine = [[-.5,56],[0,56],[1,53],[2,52],[3,55],[4,51],[5,54],[7,53],[8,50],[9,45],[10,49],[12,49],[13,53],[14,53],[15,52],[16,52],[17,51],[18,64],[19,60],[20,62],[21,70],[22,72],[23,79],[24,90],[25,87],[26,90],[27,81],[28,84],[29,90],[30,88],[31,86],[32,82],[33,79],[36,79],[37,81],[38,79],[39,79],[40,77],[41,77],[42,76],[43,66],[44,59],[45,63],[46,60],[47,70],[48,67],[49,60],[50,63],[51,63],[52,61],[53,59],[54,56],[55,54],[56,57],[59,56],[60,51],[61,39],[62,31],[63,36],[64,38],[65,23],[67,20],[68,25],[69,28],[70,27],[71,23],[72,29],[73,27],[74,30],[75,31],[76,29],[77,33],[78,34],[79,33],[80,38],[81,54],[82,61],[83,62],[84,58],[85,61],[86,67],[87,61],[88,58],[89,59],[90,59],[91,61],[92,59],[93,49],[94,50],[95,56],[96,55],[97,50],[98,48],[100,50],[101,48],[103,45],[104,41],[105,51],[106,48],[107,51],[108,50],[109,48],[110,48],[112,63],[113,69],[114,68],[115,65],[116,68],[117,71],[118,71],[119,76],[120,75],[121,67],[122,65],[123,66],[124,72],[125,67],[126,66]];
const askDepth = [[6,181],[8,181],[9,178],[15,175],[17,163],[19,162],[34,159],[36,157],[46,152],[49,135],[54,132],[55,124]];
const bidDepth = [[6,184],[10,189],[23,191],[24,198],[27,205],[32,208],[34,212],[36,227],[43,232],[46,237],[69,240],[70,245]];

function add(parent, name, attrs, text) {
  const el = document.createElementNS(NS, name);
  for (const key in attrs) el.setAttribute(key, attrs[key]);
  if (text !== undefined) el.textContent = text;
  parent.appendChild(el);
  return el;
}
const crisp = (v) => Math.floor(v) + 0.5;

function draw() {
  const width = document.querySelector('.panels').clientWidth;
  const plot = width - AXIS;
  const step = plot / BARS;
  const x = (i) => step * (i + 0.52);
  const mid = plot + AXIS / 2;

  const line = (svg, x1, y1, x2, y2, color, extra) =>
    add(svg, 'line', { x1, y1, x2, y2, stroke: color, ...extra });
  const path = (svg, pts, color, extra) =>
    add(svg, 'polyline', { points: pts.map((p) => p.join()).join(' '), fill: 'none', stroke: color, ...extra });
  const label = (svg, y, text, color) =>
    add(svg, 'text', { x: color ? mid + 2 : mid, y: y + 4, 'text-anchor': 'middle', fill: color || '#b4b4b4' }, text);
  const title = (svg, y, text) => {
    add(svg, 'rect', { x: 5, y: y - 10, width: text.length * 6, height: 14, fill: '#323232' });
    add(svg, 'text', { x: 6, y, fill: '#bcbcbc' }, text);
  };
  const open = (id, rows) => {
    const svg = document.getElementById(id);
    svg.replaceChildren();
    const h = svg.getBoundingClientRect().height;
    for (let i = 0; i < BARS; i += 4) line(svg, crisp(x(i)), 0, crisp(x(i)), h, '#3e3e3e');
    for (const y of rows) {
      line(svg, 0, crisp(y), plot, crisp(y), '#3e3e3e');
      line(svg, plot, crisp(y), plot + 6, crisp(y), '#0a0a0a');
      line(svg, width - 5, crisp(y), width, crisp(y), '#0a0a0a');
    }
    if (id !== 'price') line(svg, 0, 0.5, width, 0.5, '#050505');
    return svg;
  };
  const axis = (svg) => line(svg, crisp(plot), 0, crisp(plot), 2000, '#050505');
  const marker = (svg, y, color, dotted) => {
    if (dotted) line(svg, plot + 6, crisp(y), width, crisp(y), color, { 'stroke-dasharray': '2 2' });
    add(svg, 'path', { d: `M${plot} ${y + 0.5}l6-5.500v11z`, fill: color });
  };

  // price
  const main = document.getElementById('price');
  const k = main.getBoundingClientRect().height / BASE;
  const rows = [25, 132.5, 240, 347.5, 455, 562.5, 670, 777].map((v) => v * k);
  open('price', rows);
  const defs = add(main, 'defs', {});
  const fade = (id, y1, y2, color) => {
    const g = add(defs, 'linearGradient', { id, gradientUnits: 'userSpaceOnUse', x1: 0, x2: 0, y1: y1 * k, y2: y2 * k });
    add(g, 'stop', { offset: 0, 'stop-color': color, 'stop-opacity': 0 });
    add(g, 'stop', { offset: 1, 'stop-color': color, 'stop-opacity': 0.97 });
  };
  fade('greenFade', 25, 760, '#28ff2c');
  fade('redFade', 790, 40, '#ff0f1c');
  const top = spread.map((v, i) => [x(i), v * k]);
  const low = spread.map((v, i) => [x(i), v * k + 2.500]);
  path(main, [[x(0), 25 * k], ...top, [x(126), 25 * k]], 'none', { fill: 'url(#greenFade)' });
  path(main, [[x(0), 790 * k], ...low, [x(126), 790 * k]], 'none', { fill: 'url(#redFade)' });
  path(main, low, '#e01520');
  path(main, top, '#2bf52f', { 'stroke-width': 1.200 });
  axis(main);
  rows.forEach((y, n) => label(main, y, 3450 - n * 10));
  path(main, askDepth.map((p) => [plot + p[0], p[1] * k]), '#e01520', { 'stroke-width': 1.200 });
  path(main, bidDepth.map((p) => [plot + p[0], p[1] * k]), '#2be52f', { 'stroke-width': 1.200 });
  marker(main, 182 * k, '#ffff30');
  label(main, 181 * k, '3435.5', '#f0f032');
  title(main, 14, 'Candlestick Chart');

  // volume
  const vol = open('volume', [23, 56, 90]);
  volume.forEach((v, i) => add(vol, 'rect', { x: Math.round(x(i) - 5.500), y: 91 - v, width: 11, height: v, fill: '#ff0f1c' }));
  axis(vol);
  label(vol, 22, '240000');
  label(vol, 56, '120000');
  label(vol, 90, '0', '#f0f032');
  marker(vol, 90, '#ffff30');
  title(vol, 11, 'Volume');

  // macd
  const macd = open('macd', [20, 91]);
  histogram.forEach((entry, i) => {
    const v = parseInt(entry, 10);
    const hollow = entry.endsWith('o');
    const color = v > 0 ? '#28ff2c' : '#ff0f1c';
    const h = Math.abs(v);
    const left = Math.round(x(i) - 5.500);
    const y = v > 0 ? 64 - v : 63;
    if (hollow) add(macd, 'rect', { x: left + 0.5, y: y + 0.5, width: 10, height: h - 1, fill: 'none', stroke: color });
    else add(macd, 'rect', { x: left, y, width: 11, height: h, fill: color });
  });
  path(macd, macdLine.map((p) => [x(p[0]), p[1]]), '#2ba6dc', { 'stroke-width': 1.400 });
  path(macd, signalLine.map((p) => [x(p[0]), p[1]]), '#e08c28', { 'stroke-width': 1.400 });
  axis(macd);
  label(macd, 20, '17.343');
  label(macd, 90, '-10.841');
  marker(macd, 61, '#2be52f', true);
  marker(macd, 69, '#2ba6dc', true);
  marker(macd, 72, '#ff9a28', true);
  title(macd, 14, 'MACD (10/26/9)');

  // rate of change
  const roc = open('roc', [20, 90]);
  const g = add(add(roc, 'defs', {}), 'linearGradient', { id: 'rocTone', gradientUnits: 'userSpaceOnUse', x1: 0, x2: 0, y1: 60, y2: 65 });
  add(g, 'stop', { offset: 0, 'stop-color': '#2ba6dc' });
  add(g, 'stop', { offset: 1, 'stop-color': '#e8481f' });
  add(roc, 'rect', { x: 0, y: 56, width: plot, height: 11, fill: '#4a4a4a' });
  line(roc, 0, 55.5, plot, 55.5, '#d98320');
  line(roc, 0, 67.5, plot, 67.5, '#2ba6dc');
  path(roc, rocLine.map((p) => [x(p[0]), p[1]]), 'url(#rocTone)', { 'stroke-width': 1.400 });
  axis(roc);
  label(roc, 20, '1.4273');
  label(roc, 90, '-1.0086');
  marker(roc, 66, '#f0481f', true);
  title(roc, 14, 'ROC (20/-0.2/0.2)');

  // time labels; the first hour sits against the left edge
  const time = document.getElementById('time');
  time.replaceChildren();
  line(time, 0, 0.5, plot, 0.5, '#050505');
  for (let n = 0; n < 32; n++) {
    const cx = x(n * 4);
    const hour = (12 + n) % 24;
    line(time, crisp(cx), 1, crisp(cx), 6, '#3e3e3e');
    if (n === 0) {
      add(time, 'text', { x: 0, y: 18, fill: '#b4b4b4' }, '2:00');
      continue;
    }
    add(time, 'text', { x: cx, y: 18, 'text-anchor': 'middle', fill: '#b4b4b4' },
      hour ? String(hour).padStart(2, '0') + ':00' : '01 Feb');
  }
}
draw();
window.addEventListener('resize', draw);
```
